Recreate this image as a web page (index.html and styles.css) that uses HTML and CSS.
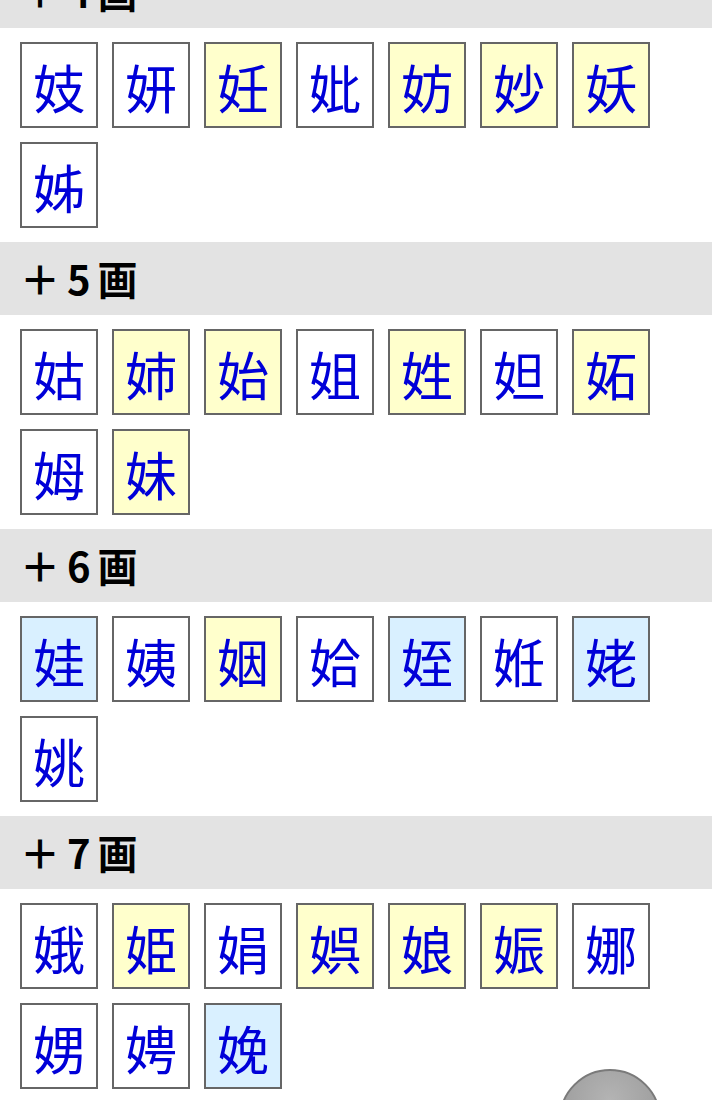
FILE: index.html
```html
<!DOCTYPE html>
<html lang="ja">
<head>
<meta charset="utf-8">
<title>女部</title>
<link rel="stylesheet" href="styles.css">
</head>
<body>
<div class="list">
  <section class="group">
    <h2 class="head">＋4画</h2>
    <div class="grid">
      <a class="k">妓</a><a class="k">妍</a><a class="k y">妊</a><a class="k">妣</a><a class="k y">妨</a><a class="k y">妙</a><a class="k y">妖</a><a class="k">姊</a>
    </div>
  </section>
  <section class="group">
    <h2 class="head">＋5画</h2>
    <div class="grid">
      <a class="k">姑</a><a class="k y">姉</a><a class="k y">始</a><a class="k">姐</a><a class="k y">姓</a><a class="k">妲</a><a class="k y">妬</a><a class="k">姆</a><a class="k y">妹</a>
    </div>
  </section>
  <section class="group">
    <h2 class="head">＋6画</h2>
    <div class="grid">
      <a class="k b">娃</a><a class="k">姨</a><a class="k y">姻</a><a class="k">姶</a><a class="k b">姪</a><a class="k">姙</a><a class="k b">姥</a><a class="k">姚</a>
    </div>
  </section>
  <section class="group">
    <h2 class="head">＋7画</h2>
    <div class="grid">
      <a class="k">娥</a><a class="k y">姫</a><a class="k">娟</a><a class="k y">娯</a><a class="k y">娘</a><a class="k y">娠</a><a class="k">娜</a><a class="k">娚</a><a class="k">娉</a><a class="k b">娩</a>
    </div>
  </section>
</div>
<div class="fab"></div>
</body>
</html>
```
FILE: styles.css
```css
html, body {
  margin: 0;
  padding: 0;
  background: #fff;
}
body {
  font-family: "Noto Sans CJK JP", "Noto Sans", sans-serif;
  overflow: hidden;
}
.list {
  margin-top: -45px;
}
.head {
  margin: 0;
  height: 73px;
  box-sizing: border-box;
  background: #e3e3e3;
  display: flex;
  align-items: center;
  padding-left: 20px;
  padding-bottom: 2px;
  font-size: 40px;
  letter-spacing: 7px;
  font-weight: 700;
  color: #000;
  line-height: 1;
}
.grid {
  display: flex;
  flex-wrap: wrap;
  gap: 14px;
  padding: 14px 20px;
}
.k {
  width: 78px;
  height: 86px;
  box-sizing: border-box;
  border: 2px solid #666;
  background: #fff;
  color: #0000d8;
  font-size: 52px;
  line-height: 1;
  display: flex;
  align-items: center;
  justify-content: center;
  padding-top: 4px;
  text-decoration: none;
}
.k.y { background: #ffffcc; }
.k.b { background: #d9f0ff; }
.fab {
  position: fixed;
  right: 51px;
  bottom: -71px;
  width: 102px;
  height: 102px;
  border-radius: 50%;
  box-sizing: border-box;
  border: 2px solid #7a7a7a;
  background: radial-gradient(circle at 50% 30%, #b4b4b4 0%, #a2a2a2 50%, #909090 100%);
}
```
